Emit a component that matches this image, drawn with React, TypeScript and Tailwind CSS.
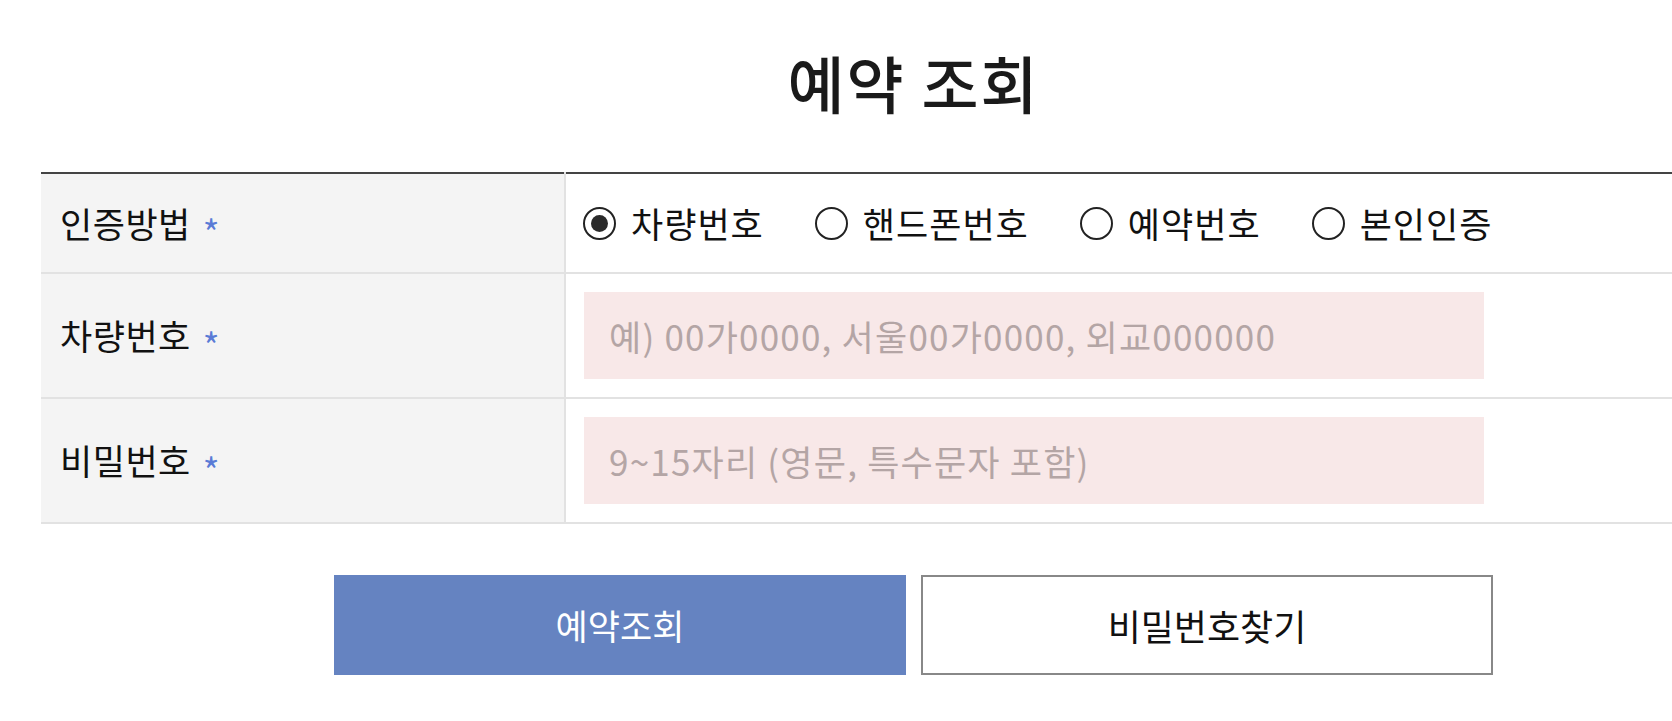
import { useState } from "react";

const FONT = "font-['Noto_Sans_CJK_KR','Noto_Sans',sans-serif]";

const METHODS = ["차량번호", "핸드폰번호", "예약번호", "본인인증"];

function Radio({ checked }: { checked: boolean }) {
  return (
    <span className="flex h-[33px] w-[33px] shrink-0 items-center justify-center rounded-full border-2 border-[#222]">
      {checked && <span className="h-[17px] w-[17px] rounded-full bg-[#2a2a2a]" />}
    </span>
  );
}

function Label({ text }: { text: string }) {
  return (
    <div className="flex items-center bg-[#f4f4f4] pl-[19px] text-[35px] tracking-[0.5px] text-[#111]">
      <span>{text}</span>
      <span className="ml-[12px] translate-y-[8px] text-[36px] text-[#5a7bd6]">*</span>
    </div>
  );
}

function Field({ placeholder }: { placeholder: string }) {
  return (
    <div className="py-[18px] pl-[18px] pr-0">
      <input
        className={`h-[87px] w-[900px] bg-[#f8e8e8] pl-[25px] text-[35px] tracking-[1.2px] text-[#333] outline-none placeholder:text-[#b4a5a5] ${FONT}`}
        placeholder={placeholder}
      />
    </div>
  );
}

export default function App() {
  const [method, setMethod] = useState(0);

  return (
    <div className={`min-h-screen overflow-hidden bg-white ${FONT}`}>
      <div className="ml-[41px] w-[1745px]">
        <h2 className="pt-[51px] text-center text-[62px] leading-none font-medium tracking-[2px] text-[#1a1a1a]">
          예약 조회
        </h2>

        <div className="mt-[59px]">
          {/* 인증방법 */}
          <div className="grid grid-cols-[523px_2px_1fr] border-b-2 border-[#e2e2e2]">
            <div className="grid h-[100px] border-t-2 border-[#444]">
              <Label text="인증방법" />
            </div>
            <div className="bg-[#e2e2e2]" />
            <div className="flex items-center border-t-2 border-[#444] pl-[17px] text-[35px] tracking-[1px] text-[#111]">
              {METHODS.map((m, i) => (
                <label
                  key={m}
                  className="mr-[51px] flex cursor-pointer items-center gap-[15px]"
                  onClick={() => setMethod(i)}
                >
                  <Radio checked={method === i} />
                  <span>{m}</span>
                </label>
              ))}
            </div>
          </div>

          {/* 차량번호 */}
          <div className="grid grid-cols-[523px_2px_1fr] border-b-2 border-[#e2e2e2]">
            <Label text="차량번호" />
            <div className="bg-[#e2e2e2]" />
            <Field placeholder="예) 00가0000, 서울00가0000, 외교000000" />
          </div>

          {/* 비밀번호 */}
          <div className="grid grid-cols-[523px_2px_1fr] border-b-2 border-[#e2e2e2]">
            <Label text="비밀번호" />
            <div className="bg-[#e2e2e2]" />
            <Field placeholder="9~15자리 (영문, 특수문자 포함)" />
          </div>
        </div>

        <div className="mt-[51px] flex justify-center gap-[15px]">
          <button className="h-[100px] w-[572px] bg-[#6583c1] text-[35px] text-white">
            예약조회
          </button>
          <button className="h-[100px] w-[572px] border-2 border-[#888] bg-white text-[36px] text-[#111]">
            비밀번호찾기
          </button>
        </div>
      </div>
    </div>
  );
}
